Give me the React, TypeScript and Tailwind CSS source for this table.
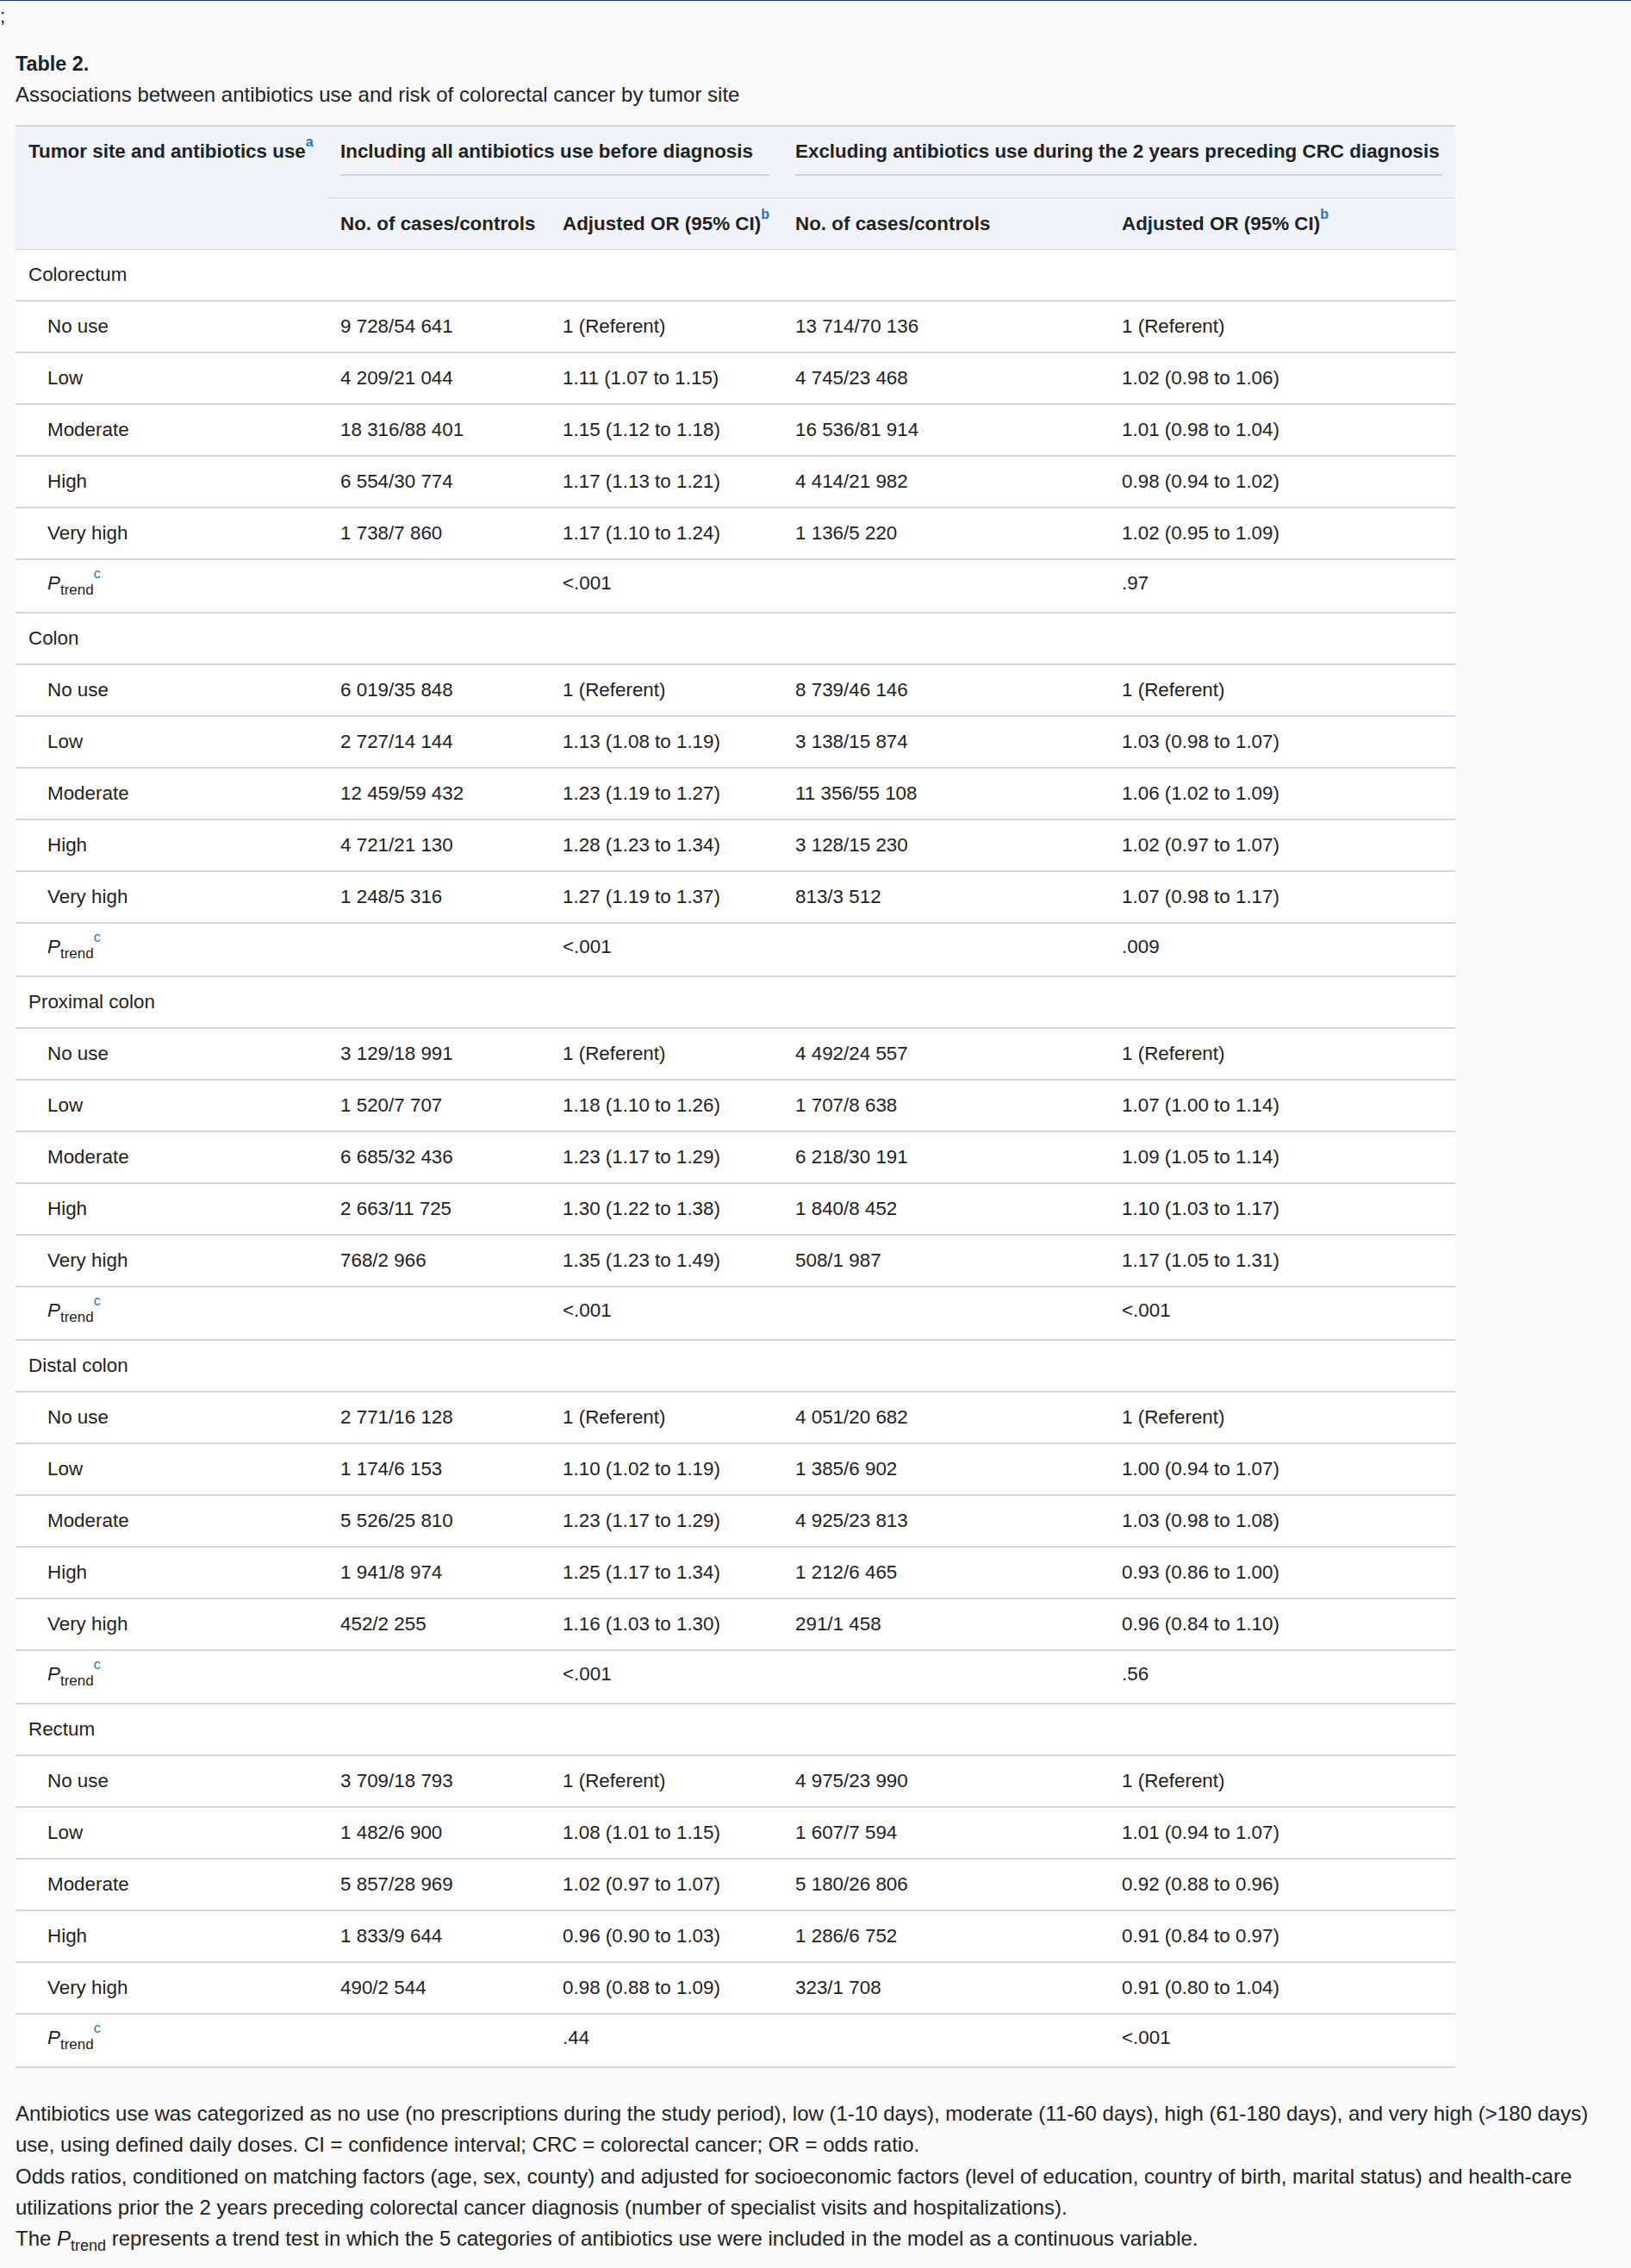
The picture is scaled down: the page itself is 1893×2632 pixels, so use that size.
import React from "react";

type Row = [string, string, string, string, string];

type Group = {
  site: string;
  rows: Row[];
  trend: [string, string];
};

const groups: Group[] = [
  {
    site: "Colorectum",
    rows: [
      ["No use", "9 728/54 641", "1 (Referent)", "13 714/70 136", "1 (Referent)"],
      ["Low", "4 209/21 044", "1.11 (1.07 to 1.15)", "4 745/23 468", "1.02 (0.98 to 1.06)"],
      ["Moderate", "18 316/88 401", "1.15 (1.12 to 1.18)", "16 536/81 914", "1.01 (0.98 to 1.04)"],
      ["High", "6 554/30 774", "1.17 (1.13 to 1.21)", "4 414/21 982", "0.98 (0.94 to 1.02)"],
      ["Very high", "1 738/7 860", "1.17 (1.10 to 1.24)", "1 136/5 220", "1.02 (0.95 to 1.09)"],
    ],
    trend: ["<.001", ".97"],
  },
  {
    site: "Colon",
    rows: [
      ["No use", "6 019/35 848", "1 (Referent)", "8 739/46 146", "1 (Referent)"],
      ["Low", "2 727/14 144", "1.13 (1.08 to 1.19)", "3 138/15 874", "1.03 (0.98 to 1.07)"],
      ["Moderate", "12 459/59 432", "1.23 (1.19 to 1.27)", "11 356/55 108", "1.06 (1.02 to 1.09)"],
      ["High", "4 721/21 130", "1.28 (1.23 to 1.34)", "3 128/15 230", "1.02 (0.97 to 1.07)"],
      ["Very high", "1 248/5 316", "1.27 (1.19 to 1.37)", "813/3 512", "1.07 (0.98 to 1.17)"],
    ],
    trend: ["<.001", ".009"],
  },
  {
    site: "Proximal colon",
    rows: [
      ["No use", "3 129/18 991", "1 (Referent)", "4 492/24 557", "1 (Referent)"],
      ["Low", "1 520/7 707", "1.18 (1.10 to 1.26)", "1 707/8 638", "1.07 (1.00 to 1.14)"],
      ["Moderate", "6 685/32 436", "1.23 (1.17 to 1.29)", "6 218/30 191", "1.09 (1.05 to 1.14)"],
      ["High", "2 663/11 725", "1.30 (1.22 to 1.38)", "1 840/8 452", "1.10 (1.03 to 1.17)"],
      ["Very high", "768/2 966", "1.35 (1.23 to 1.49)", "508/1 987", "1.17 (1.05 to 1.31)"],
    ],
    trend: ["<.001", "<.001"],
  },
  {
    site: "Distal colon",
    rows: [
      ["No use", "2 771/16 128", "1 (Referent)", "4 051/20 682", "1 (Referent)"],
      ["Low", "1 174/6 153", "1.10 (1.02 to 1.19)", "1 385/6 902", "1.00 (0.94 to 1.07)"],
      ["Moderate", "5 526/25 810", "1.23 (1.17 to 1.29)", "4 925/23 813", "1.03 (0.98 to 1.08)"],
      ["High", "1 941/8 974", "1.25 (1.17 to 1.34)", "1 212/6 465", "0.93 (0.86 to 1.00)"],
      ["Very high", "452/2 255", "1.16 (1.03 to 1.30)", "291/1 458", "0.96 (0.84 to 1.10)"],
    ],
    trend: ["<.001", ".56"],
  },
  {
    site: "Rectum",
    rows: [
      ["No use", "3 709/18 793", "1 (Referent)", "4 975/23 990", "1 (Referent)"],
      ["Low", "1 482/6 900", "1.08 (1.01 to 1.15)", "1 607/7 594", "1.01 (0.94 to 1.07)"],
      ["Moderate", "5 857/28 969", "1.02 (0.97 to 1.07)", "5 180/26 806", "0.92 (0.88 to 0.96)"],
      ["High", "1 833/9 644", "0.96 (0.90 to 1.03)", "1 286/6 752", "0.91 (0.84 to 0.97)"],
      ["Very high", "490/2 544", "0.98 (0.88 to 1.09)", "323/1 708", "0.91 (0.80 to 1.04)"],
    ],
    trend: [".44", "<.001"],
  },
];

// same five columns for header and body
const COLS = "grid grid-cols-[362px_258px_270px_379px_402px]";

function Note({ children }: { children: React.ReactNode }) {
  return <sup className="top-[-13px] text-[16px] text-[#1f74c0]">{children}</sup>;
}

function PTrend() {
  return (
    <span>
      <i>P</i>
      <sub className="bottom-[-6px] text-[17px]">trend</sub>
      <Note>c</Note>
    </span>
  );
}

function TableHeader() {
  return (
    <div className={`${COLS} bg-[#f0f4fa] border-t-2 border-b border-[#cfd3e8] font-bold`}>
      <div className="row-span-2 px-[15px] pt-[11px] leading-[36px]">
        Tumor site and antibiotics use<Note>a</Note>
      </div>
      <div className="col-span-2 h-[83px] border-b border-[#d3d6e9] px-[15px] pt-[11px]">
        <div className="border-b-2 border-[#cdd1e6] pb-[8px] leading-[36px]">
          Including all antibiotics use before diagnosis
        </div>
      </div>
      <div className="col-span-2 h-[83px] border-b border-[#d3d6e9] px-[15px] pt-[11px]">
        <div className="border-b-2 border-[#cdd1e6] pb-[8px] leading-[36px]">
          Excluding antibiotics use during the 2 years preceding CRC diagnosis
        </div>
      </div>
      <div className="h-[59px] flex items-center px-[15px]">No. of cases/controls</div>
      <div className="h-[59px] flex items-center px-[15px]">
        <span>
          Adjusted OR (95% CI)<Note>b</Note>
        </span>
      </div>
      <div className="h-[59px] flex items-center px-[15px]">No. of cases/controls</div>
      <div className="h-[59px] flex items-center px-[15px]">
        <span>
          Adjusted OR (95% CI)<Note>b</Note>
        </span>
      </div>
    </div>
  );
}

function GroupRows({ group }: { group: Group }) {
  return (
    <>
      <div className="h-[60px] flex items-center px-[15px] border-b-2 border-[#d2d5e9]">{group.site}</div>
      {group.rows.map((row) => (
        <div key={row[0]} className={`${COLS} h-[60px] items-center border-b-2 border-[#d2d5e9]`}>
          <div className="pl-[37px] pr-[15px]">{row[0]}</div>
          <div className="px-[15px]">{row[1]}</div>
          <div className="px-[15px]">{row[2]}</div>
          <div className="px-[15px]">{row[3]}</div>
          <div className="px-[15px]">{row[4]}</div>
        </div>
      ))}
      <div className={`${COLS} h-[62px] pb-[6px] items-center border-b-2 border-[#d2d5e9]`}>
        <div className="pl-[37px] pr-[15px]">
          <PTrend />
        </div>
        <div className="px-[15px]"></div>
        <div className="px-[15px]">{group.trend[0]}</div>
        <div className="px-[15px]"></div>
        <div className="px-[15px]">{group.trend[1]}</div>
      </div>
    </>
  );
}

export default function App() {
  return (
    <div className="min-h-screen bg-[#f9f9f9] border-t border-[#173a6a] text-[#222] text-[22.4px] font-['Liberation_Sans',Arial,sans-serif]">
      <div className="h-[36px] leading-[36px]">;</div>

      <div className="mx-[18px] mt-[19px]">
        <div className="text-[23.4px] font-bold leading-[36px]">Table 2.</div>
        <div className="text-[24px] leading-[36px]">
          Associations between antibiotics use and risk of colorectal cancer by tumor site
        </div>

        {/* Table */}
        <div className="mt-[17px] w-[1671px] bg-white leading-[36px]">
          <TableHeader />
          {groups.map((g) => (
            <GroupRows key={g.site} group={g} />
          ))}
        </div>

        {/* Footnotes */}
        <div className="mt-[35px] text-[24px] leading-[36.3px] pb-[20px]">
          <div>
            Antibiotics use was categorized as no use (no prescriptions during the study period), low (1-10 days),
            moderate (11-60 days), high (61-180 days), and very high (&gt;180 days) use, using defined daily doses. CI =
            confidence interval; CRC = colorectal cancer; OR = odds ratio.
          </div>
          <div>
            Odds ratios, conditioned on matching factors (age, sex, county) and adjusted for socioeconomic factors (level
            of education, country of birth, marital status) and health-care utilizations prior the 2 years preceding
            colorectal cancer diagnosis (number of specialist visits and hospitalizations).
          </div>
          <div>
            The <i>P</i>
            <sub className="bottom-[-6px] text-[18px]">trend</sub> represents a trend test in which the 5 categories of
            antibiotics use were included in the model as a continuous variable.
          </div>
        </div>
      </div>
    </div>
  );
}
